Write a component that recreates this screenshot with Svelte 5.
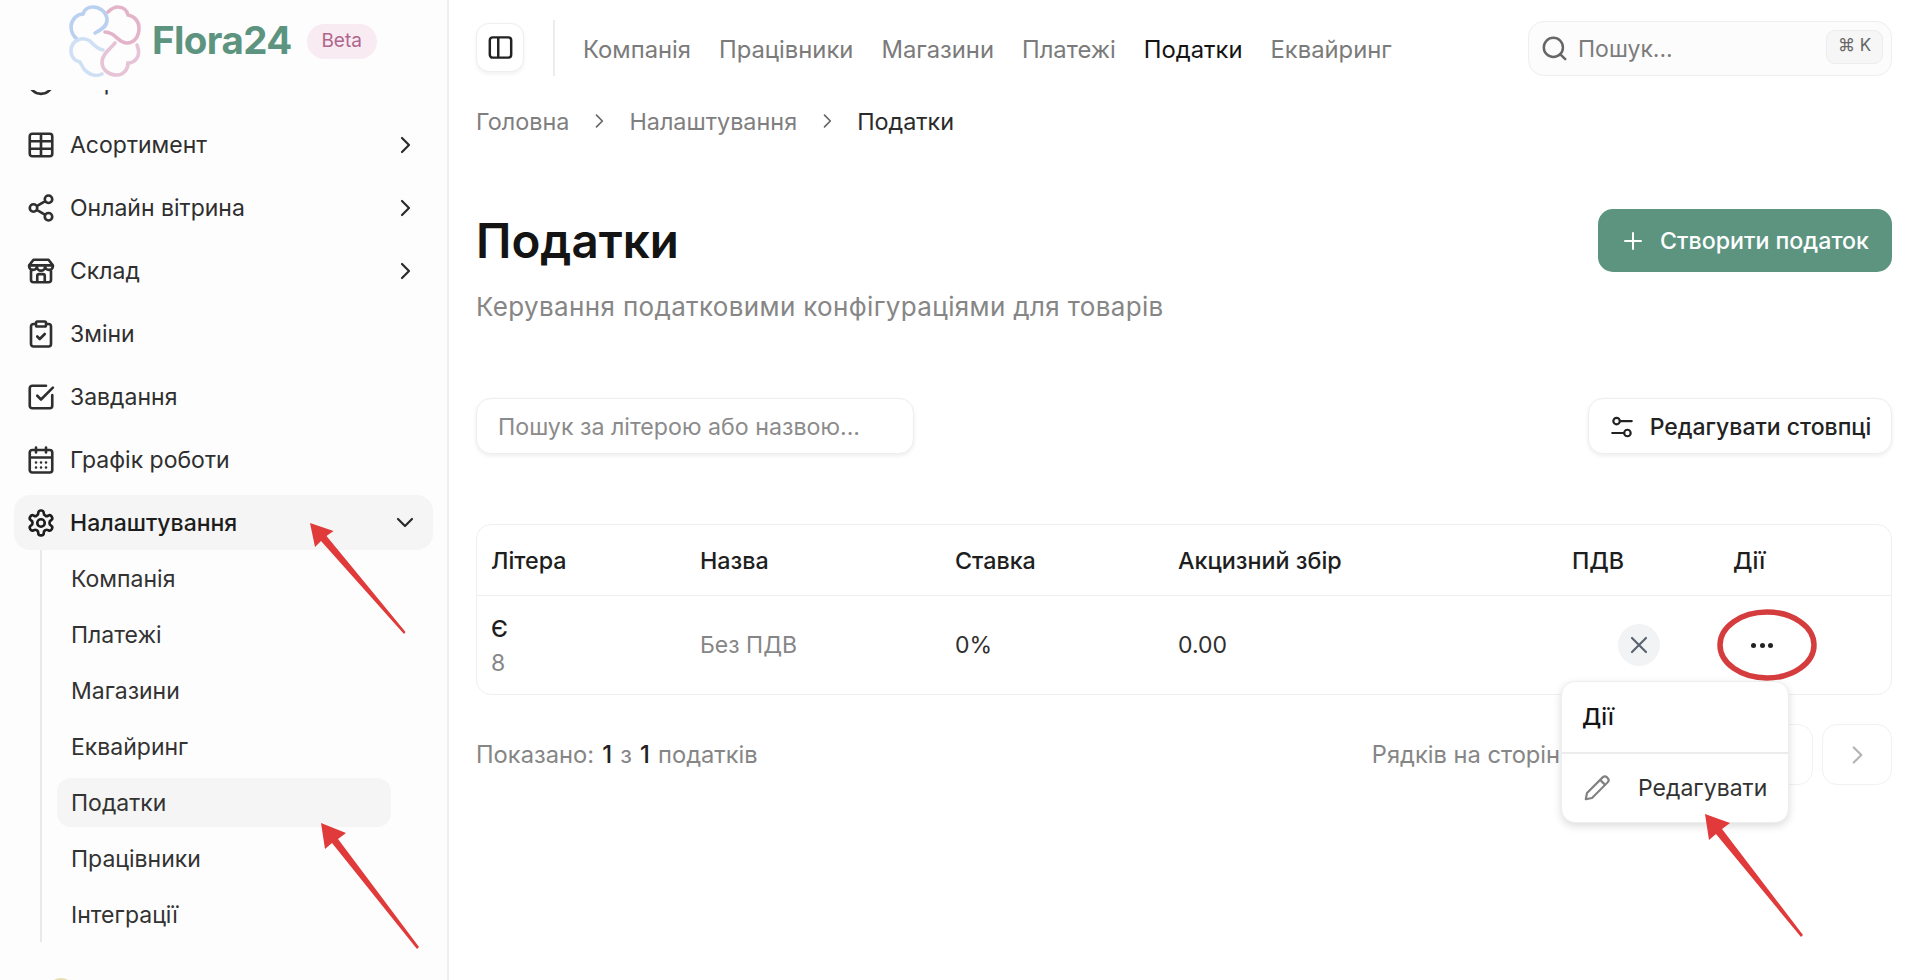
<script>
    const icons = {
        circle: 'M12 21.500a9.500 9.500 0 1 0 0-19 9.500 9.500 0 0 0 0 19z',
        table: 'M12 3v18 M3 9h18 M3 15h18 M5 3h14a2 2 0 0 1 2 2v14a2 2 0 0 1-2 2H5a2 2 0 0 1-2-2V5a2 2 0 0 1 2-2z',
        share: 'M18 8a3 3 0 1 0 0-6 3 3 0 0 0 0 6z M6 15a3 3 0 1 0 0-6 3 3 0 0 0 0 6z M18 22a3 3 0 1 0 0-6 3 3 0 0 0 0 6z M8.6 13.5l6.8 4 M15.4 6.5l-6.8 4',
        store: 'M2.5 7.5 6 3h12l3.500 4.500 M2.500 7.500v1a3.200 3.200 0 0 0 6.300 0 3.200 3.200 0 0 0 6.400 0 3.200 3.200 0 0 0 6.300 0v-1z M4 11.500V19a2 2 0 0 0 2 2h12a2 2 0 0 0 2-2v-7.500 M9 21v-5a1.500 1.500 0 0 1 1.500-1.500h3A1.500 1.500 0 0 1 15 16v5',
        clipboard: 'M9 2h6a1 1 0 0 1 1 1v2a1 1 0 0 1-1 1H9a1 1 0 0 1-1-1V3a1 1 0 0 1 1-1z M16 4h2a2 2 0 0 1 2 2v14a2 2 0 0 1-2 2H6a2 2 0 0 1-2-2V6a2 2 0 0 1 2-2h2 M9 14l2 2 4-4',
        check: 'M21 10.500V19a2 2 0 0 1-2 2H5a2 2 0 0 1-2-2V5a2 2 0 0 1 2-2h11 M9 11l3 3 9.500-9.500',
        calendar: 'M8 2v4 M16 2v4 M5 4h14a2 2 0 0 1 2 2v14a2 2 0 0 1-2 2H5a2 2 0 0 1-2-2V6a2 2 0 0 1 2-2z M3 10h18 M8 14h.01 M12 14h.01 M16 14h.01 M8 18h.01 M12 18h.01 M16 18h.01',
        gear: 'M12.200 2h-.400a2 2 0 0 0-2 2v.200a2 2 0 0 1-1 1.700l-.400.300a2 2 0 0 1-2 0l-.200-.100a2 2 0 0 0-2.700.700l-.200.400a2 2 0 0 0 .700 2.700l.200.100a2 2 0 0 1 1 1.700v.500a2 2 0 0 1-1 1.700l-.200.100a2 2 0 0 0-.700 2.700l.200.400a2 2 0 0 0 2.700.700l.200-.100a2 2 0 0 1 2 0l.400.300a2 2 0 0 1 1 1.700v.200a2 2 0 0 0 2 2h.400a2 2 0 0 0 2-2v-.200a2 2 0 0 1 1-1.700l.400-.300a2 2 0 0 1 2 0l.200.100a2 2 0 0 0 2.700-.700l.200-.400a2 2 0 0 0-.700-2.700l-.200-.100a2 2 0 0 1-1-1.700v-.500a2 2 0 0 1 1-1.700l.200-.100a2 2 0 0 0 .700-2.700l-.200-.400a2 2 0 0 0-2.700-.700l-.200.100a2 2 0 0 1-2 0l-.400-.300a2 2 0 0 1-1-1.700V4a2 2 0 0 0-2-2z M12 15a3 3 0 1 0 0-6 3 3 0 0 0 0 6z'
    };

    const menu = [
        { label: 'Маркетинг', icon: 'circle' },
        { label: 'Асортимент', icon: 'table', arrow: true },
        { label: 'Онлайн вітрина', icon: 'share', arrow: true },
        { label: 'Склад', icon: 'store', arrow: true },
        { label: 'Зміни', icon: 'clipboard' },
        { label: 'Завдання', icon: 'check' },
        { label: 'Графік роботи', icon: 'calendar' }
    ];

    const subMenu = ['Компанія', 'Платежі', 'Магазини', 'Еквайринг', 'Податки', 'Працівники', 'Інтеграції'];
    const topNav = ['Компанія', 'Працівники', 'Магазини', 'Платежі', 'Податки', 'Еквайринг'];
    const lobes = [
        { d: 'M25 27C31 24 38 20 37 13 36 5 29 1 23 1 18 1 14 4 13 8 7 8 2 13 1 20 1 26 3 30 7 33', color: '#b9d0f0' },
        { d: 'M38 6C41 3 44 1 48 1 53 1 57 4 58 9 64 10 69 15 69 22 69 31 64 37 57 37 50 37 47 31 42 28 40 27 37 26 35 26', color: '#e3b4c9' },
        { d: 'M67 39C69 44 69 49 67 52 65 55 61 57 58 57 58 64 53 69 47 69 39 69 32 64 32 56 32 48 40 43 45 37', color: '#e6c3d6' },
        { d: 'M33 44C27 43 24 39 20 35 17 33 12 32 8 34 3 36 1 40 1 45 1 50 4 55 10 56 12 60 13 63 17 66 22 70 28 70 32 68', color: '#cfe0f5' }
    ];
</script>

{#snippet icon(d, size = 30, width = 2.1)}
    <svg class="icon" viewBox="0 0 24 24" style="width:{size}px;height:{size}px" fill="none" stroke="currentColor" stroke-width={width} stroke-linecap="round" stroke-linejoin="round">
        <path {d} />
    </svg>
{/snippet}

<div class="page">
    <aside class="sidebar">
        <div class="logo">
            <svg class="flower" viewBox="0 0 70 70" fill="none" stroke-width="3.600" stroke-linecap="round">
                {#each lobes as lobe}
                    <path d={lobe.d} stroke={lobe.color} />
                {/each}
            </svg>
            <span class="brand">Flora24</span>
            <span class="beta">Beta</span>
        </div>

        <nav class="side-nav">
            <div class="side-list">
                {#each menu as item}
                    <div class="side-item">
                        {@render icon(icons[item.icon])}
                        <span>{item.label}</span>
                        {#if item.arrow}
                            <svg class="chev" viewBox="0 0 24 24" fill="none" stroke="currentColor" stroke-width="2.200" stroke-linecap="round" stroke-linejoin="round"><path d="m9 5 7 7-7 7" /></svg>
                        {/if}
                    </div>
                {/each}
                <div class="side-item active">
                    {@render icon(icons.gear)}
                    <span>Налаштування</span>
                    <svg class="chev" viewBox="0 0 24 24" fill="none" stroke="currentColor" stroke-width="2.200" stroke-linecap="round" stroke-linejoin="round"><path d="m5 8 7 7 7-7" /></svg>
                </div>
            </div>
            <div class="sub-list">
                {#each subMenu as sub}
                    <div class="sub-item" class:current={sub === 'Податки'}>{sub}</div>
                {/each}
            </div>
        </nav>

        <div class="side-foot"><div class="avatar"></div></div>
    </aside>

    <main class="main">
        <header class="topbar">
            <button class="toggle" aria-label="Меню">
                <svg viewBox="0 0 24 24" fill="none" stroke="#222" stroke-width="2.200" stroke-linejoin="round"><rect x="2.500" y="3" width="19" height="18" rx="2.500" /><path d="M10 3v18" /></svg>
            </button>
            <div class="divider"></div>
            <nav class="top-nav">
                {#each topNav as link}
                    <span class:on={link === 'Податки'}>{link}</span>
                {/each}
            </nav>
            <div class="global-search">
                <svg viewBox="0 0 24 24" fill="none" stroke="#666" stroke-width="2.200" stroke-linecap="round"><circle cx="11" cy="11" r="8.500" /><path d="m21.500 21.500-4.500-4.500" /></svg>
                <span class="search-text">Пошук...</span>
                <kbd>⌘ K</kbd>
            </div>
        </header>

        <div class="crumbs">
            <span>Головна</span>
            <svg viewBox="0 0 24 24" fill="none" stroke="#666" stroke-width="2" stroke-linecap="round" stroke-linejoin="round"><path d="m9 5 7 7-7 7" /></svg>
            <span>Налаштування</span>
            <svg viewBox="0 0 24 24" fill="none" stroke="#666" stroke-width="2" stroke-linecap="round" stroke-linejoin="round"><path d="m9 5 7 7-7 7" /></svg>
            <span class="here">Податки</span>
        </div>

        <div class="title-row">
            <h1>Податки</h1>
            <button class="create">
                <svg viewBox="0 0 24 24" fill="none" stroke="#fff" stroke-width="2" stroke-linecap="round"><path d="M12 4v16 M4 12h16" /></svg>
                Створити податок
            </button>
        </div>
        <p class="subtitle">Керування податковими конфігураціями для товарів</p>

        <div class="toolbar">
            <div class="filter">Пошук за літерою або назвою...</div>
            <button class="columns">
                <svg viewBox="0 0 24 24" fill="none" stroke="#222" stroke-width="2" stroke-linecap="round"><circle cx="7" cy="6.500" r="3" /><path d="M10 6.500h11 M3 17.500h11" /><circle cx="17" cy="17.500" r="3" /></svg>
                Редагувати стовпці
            </button>
        </div>

        <div class="table-wrap">
            <table>
                <colgroup>
                    <col style="width:209px" /><col style="width:255px" /><col style="width:223px" /><col style="width:394px" /><col style="width:161px" /><col />
                </colgroup>
                <thead>
                    <tr><th>Літера</th><th>Назва</th><th>Ставка</th><th>Акцизний збір</th><th>ПДВ</th><th>Дії</th></tr>
                </thead>
                <tbody>
                    <tr>
                        <td><div class="letter">Є</div><div class="num">8</div></td>
                        <td class="muted">Без ПДВ</td>
                        <td>0%</td>
                        <td>0.00</td>
                        <td>
                            <span class="no-vat">
                                <svg viewBox="0 0 24 24" fill="none" stroke="#5b6470" stroke-width="2.200" stroke-linecap="round"><path d="M5 5l14 14 M19 5 5 19" /></svg>
                            </span>
                        </td>
                        <td><span class="dots"><i></i><i></i><i></i></span></td>
                    </tr>
                </tbody>
            </table>
        </div>

        <div class="table-foot">
            <div class="count">Показано: <b>1</b> з <b>1</b> податків</div>
            <div class="pager">
                <span class="per-page">Рядків на сторінці</span>
                <div class="page-btn"></div>
                <div class="page-btn">
                    <svg viewBox="0 0 24 24" fill="none" stroke="#b4b4b4" stroke-width="2" stroke-linecap="round" stroke-linejoin="round"><path d="m9 5 7 7-7 7" /></svg>
                </div>
            </div>
        </div>
    </main>

    <div class="popover">
        <div class="pop-head">Дії</div>
        <div class="pop-item">
            <svg viewBox="0 0 24 24" fill="none" stroke="#808080" stroke-width="1.700" stroke-linecap="round" stroke-linejoin="round"><path d="M3 21l1-5L16.500 3.500a2.500 2.500 0 0 1 3.500 0l.5.5a2.500 2.500 0 0 1 0 3.500L8 20z M14.500 5.500l4 4" /></svg>
            Редагувати
        </div>
    </div>

    <svg class="marks" viewBox="0 0 1907 980" fill="none">
        <ellipse cx="1767" cy="645" rx="47" ry="33" stroke="#d43c3e" stroke-width="5.500" />
        <path d="M310 523 333.500 531 326.500 536 405.500 632 404 634 321 541 315 547z" fill="#e03a3a" />
        <path d="M321 823 346 833 338 839 419 947 417 949 332 843 325 849z" fill="#e03a3a" />
        <path d="M1705 814 1730 823 1722 829 1803 935 1801 937 1716 834 1709 840z" fill="#e03a3a" />
    </svg>
</div>

<style>
    :global(body) {
        margin: 0;
        background: #fff;
    }

    .page {
        position: relative;
        display: flex;
        width: 1907px;
        height: 980px;
        overflow: hidden;
        font-family: Inter, "Noto Sans", sans-serif;
        font-size: 23px;
        color: #2b2b2b;
    }

    .icon {
        flex: none;
        display: block;
    }

    /* sidebar */
    .sidebar {
        flex: none;
        width: 447px;
        height: 980px;
        display: flex;
        flex-direction: column;
        background: #fdfdfd;
        border-right: 2px solid #efefef;
    }

    .logo {
        flex: none;
        height: 90px;
        box-sizing: border-box;
        padding: 6px 0 0 70px;
        display: flex;
        align-items: flex-start;
    }

    .flower {
        width: 70px;
        height: 70px;
        flex: none;
        overflow: visible;
    }

    .brand {
        margin: 8px 0 0 12px;
        font-size: 38.500px;
        line-height: 52px;
        font-weight: 700;
        letter-spacing: -0.6px;
        color: #5c9480;
    }

    .beta {
        margin: 18px 0 0 15px;
        width: 70px;
        height: 35px;
        border-radius: 18px;
        background: #f8ebf2;
        color: #b0668c;
        font-size: 19px;
        line-height: 33px;
        text-align: center;
    }

    .side-nav {
        flex: none;
        height: 852px;
        overflow: hidden;
    }

    .side-list {
        margin-top: -36px;
        padding: 0 14px;
        display: flex;
        flex-direction: column;
        gap: 8px;
    }

    .side-item {
        height: 55px;
        padding: 0 16px 0 12px;
        display: flex;
        align-items: center;
        gap: 14px;
        border-radius: 16px;
        color: #2f2f2f;
    }

    .side-item span {
        flex: 1;
    }

    .side-item.active {
        background: #f5f5f5;
        color: #1d1d1d;
        font-weight: 500;
    }

    .chev {
        width: 24px;
        height: 24px;
        flex: none;
        color: #2b2b2b;
    }

    .sub-list {
        margin-left: 40px;
        padding: 4px 0 3px 15px;
        width: 334px;
        border-left: 2px solid #e9e9e9;
        display: flex;
        flex-direction: column;
        gap: 7px;
    }

    .sub-item {
        height: 49px;
        line-height: 50px;
        padding-left: 14px;
        border-radius: 14px;
        color: #333;
    }

    .sub-item.current {
        background: #f5f5f5;
    }

    .side-foot {
        flex: 1;
        padding: 36px 0 0 48px;
        overflow: hidden;
    }

    .avatar {
        width: 26px;
        height: 26px;
        border-radius: 50%;
        background: #e9dcae;
    }

    /* main column */
    .main {
        flex: 1;
        min-width: 0;
        padding: 20px 15px 0 27px;
    }

    .topbar {
        height: 56px;
        display: flex;
        align-items: center;
    }

    .toggle {
        width: 48px;
        height: 49px;
        padding: 0;
        margin-top: -1px;
        display: flex;
        align-items: center;
        justify-content: center;
        background: #fff;
        border: 1px solid #efefef;
        border-radius: 13px;
        box-shadow: 0 2px 4px rgba(0, 0, 0, 0.06);
    }

    .toggle svg {
        width: 27px;
        height: 27px;
    }

    .divider {
        width: 2px;
        height: 56px;
        margin: 0 28px 0 29px;
        background: #ececec;
    }

    .top-nav {
        display: flex;
        gap: 28px;
        font-size: 23.800px;
        color: #7b7b7b;
        padding-top: 2px;
    }

    .top-nav span.on {
        color: #141414;
    }

    .global-search {
        margin-left: auto;
        width: 364px;
        height: 55px;
        box-sizing: border-box;
        padding: 0 8px 0 12px;
        display: flex;
        align-items: center;
        gap: 10px;
        background: #fcfcfc;
        border: 1.500px solid #eeeeee;
        border-radius: 16px;
        color: #7c7c7c;
    }

    .global-search svg {
        width: 27px;
        height: 27px;
        flex: none;
    }

    .search-text {
        padding-top: 2px;
    }

    kbd {
        margin-left: auto;
        margin-top: -3px;
        width: 57px;
        height: 34px;
        line-height: 28px;
        box-sizing: border-box;
        text-align: center;
        font-family: Inter, "DejaVu Sans", sans-serif;
        font-size: 17px;
        color: #666;
        background: #f6f6f6;
        border: 1px solid #ededed;
        border-radius: 9px;
    }

    .crumbs {
        margin-top: 30px;
        height: 30px;
        display: flex;
        align-items: center;
        font-size: 23.400px;
        color: #7f7f7f;
    }

    .crumbs svg {
        width: 20px;
        height: 20px;
        margin: 0 20px;
    }

    .crumbs .here {
        color: #2b2b2b;
    }

    .title-row {
        margin-top: 73px;
        height: 63px;
        display: flex;
        align-items: center;
        justify-content: space-between;
    }

    h1 {
        margin: 0;
        font-size: 47.500px;
        line-height: 62px;
        font-weight: 600;
        color: #141414;
    }

    .create {
        width: 294px;
        height: 63px;
        padding: 0;
        display: flex;
        align-items: center;
        justify-content: center;
        gap: 15px;
        border: none;
        border-radius: 15px;
        background: #5c9480;
        color: #fff;
        font: 500 23.200px Inter, sans-serif;
    }

    .create svg {
        width: 24px;
        height: 24px;
    }

    .subtitle {
        margin: 20px 0 0;
        line-height: 30px;
        font-size: 26px;
        letter-spacing: 0.35px;
        color: #868686;
    }

    .toolbar {
        margin-top: 76px;
        height: 56px;
        display: flex;
        justify-content: space-between;
    }

    .filter,
    .columns {
        height: 56px;
        box-sizing: border-box;
        background: #fff;
        border: 1px solid #eeeeee;
        border-radius: 15px;
        box-shadow: 0 2px 4px rgba(0, 0, 0, 0.07);
    }

    .filter {
        width: 438px;
        padding-left: 21px;
        line-height: 56px;
        font-size: 23.200px;
        color: #8b8b8b;
    }

    .columns {
        width: 304px;
        padding: 2px 0 0;
        display: flex;
        align-items: center;
        justify-content: center;
        gap: 15px;
        font: 500 23px Inter, sans-serif;
        color: #222;
    }

    .columns svg {
        width: 26px;
        height: 26px;
    }

    .table-wrap {
        margin-top: 70px;
        border: 1.500px solid #efefef;
        border-radius: 15px;
        overflow: hidden;
    }

    table {
        width: 100%;
        table-layout: fixed;
        border-collapse: collapse;
    }

    th {
        height: 70px;
        padding: 0 0 0 14px;
        text-align: left;
        font-size: 23.300px;
        font-weight: 500;
        color: #1e1e1e;
        border-bottom: 1.500px solid #efefef;
    }

    td {
        height: 98px;
        padding: 0 0 0 14px;
        color: #2f2f2f;
    }

    td.muted,
    .num {
        color: #868686;
    }

    .letter {
        font-weight: 500;
        line-height: 34px;
        margin-top: 2px;
        color: #1e1e1e;
    }

    .num {
        line-height: 34px;
    }

    .no-vat {
        margin-left: 46px;
        width: 42px;
        height: 42px;
        display: flex;
        align-items: center;
        justify-content: center;
        border-radius: 50%;
        background: #f1f3f5;
    }

    .no-vat svg {
        width: 24px;
        height: 24px;
    }

    .dots {
        margin-left: 18px;
        display: flex;
        gap: 3.500px;
    }

    .dots i {
        width: 5px;
        height: 5px;
        border-radius: 50%;
        background: #222;
    }

    .table-foot {
        margin-top: 29px;
        height: 61px;
        display: flex;
        align-items: center;
        justify-content: space-between;
        font-size: 23.700px;
        color: #868686;
    }

    .count b {
        font-weight: 500;
        color: #222;
        margin: 0 1.500px;
    }

    .pager {
        display: flex;
        align-items: center;
        gap: 9px;
    }

    .per-page {
        margin-right: 154px;
        white-space: nowrap;
    }

    .page-btn {
        width: 70px;
        height: 61px;
        display: flex;
        align-items: center;
        justify-content: center;
        box-sizing: border-box;
        border: 1.500px solid #f1f1f1;
        border-radius: 15px;
    }

    .page-btn svg {
        width: 26px;
        height: 26px;
    }

    /* dropdown over the table */
    .popover {
        position: absolute;
        left: 1561px;
        top: 681px;
        width: 228px;
        height: 142px;
        box-sizing: border-box;
        background: #fff;
        border: 1px solid #eeeeee;
        border-radius: 14px;
        box-shadow: 0 3px 8px rgba(0, 0, 0, 0.14);
    }

    .pop-head {
        height: 70px;
        padding-left: 20px;
        line-height: 70px;
        font-weight: 500;
        color: #141414;
        border-bottom: 2px solid #ececec;
    }

    .pop-item {
        height: 68px;
        padding-left: 20px;
        display: flex;
        align-items: center;
        gap: 26px;
        color: #333;
    }

    .pop-item svg {
        width: 30px;
        height: 30px;
        flex: none;
    }

    .marks {
        position: absolute;
        inset: 0;
        width: 1907px;
        height: 980px;
        pointer-events: none;
    }
</style>
